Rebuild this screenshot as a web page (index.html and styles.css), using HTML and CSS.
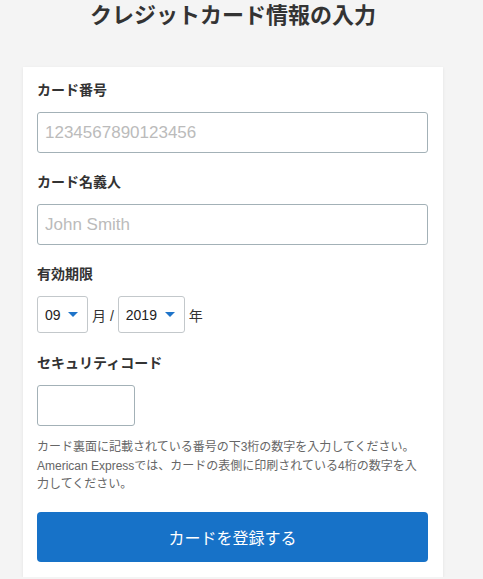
FILE: index.html
```html
<!DOCTYPE html>
<html lang="ja">
<head>
    <meta charset="UTF-8">
    <meta name="viewport" content="width=device-width, initial-scale=1.0">
    <title>クレジットカード情報の入力</title>
    <link rel="stylesheet" href="styles.css">
</head>
<body>
    <div class="wrapper">
        <h1>クレジットカード情報の入力</h1>

        <form class="card-form" id="cardForm">
            <div class="field">
                <label for="number">カード番号</label>
                <input type="text" id="number" class="text-input" placeholder="1234567890123456">
            </div>

            <div class="field">
                <label for="holder">カード名義人</label>
                <input type="text" id="holder" class="text-input" placeholder="John Smith">
            </div>

            <div class="field field-expiry">
                <label for="month">有効期限</label>
                <div class="expiry">
                    <span class="select-box">
                        <select id="month">
                            <option>01</option><option>02</option><option>03</option>
                            <option>04</option><option>05</option><option>06</option>
                            <option>07</option><option>08</option><option selected>09</option>
                            <option>10</option><option>11</option><option>12</option>
                        </select>
                    </span>
                    <span>月 /</span>
                    <span class="select-box">
                        <select id="year">
                            <option selected>2019</option><option>2020</option><option>2021</option>
                            <option>2022</option><option>2023</option><option>2024</option>
                        </select>
                    </span>
                    <span>年</span>
                </div>
            </div>

            <div class="field field-cvc">
                <label for="cvc">セキュリティコード</label>
                <input type="text" id="cvc" class="text-input cvc-input">
                <p class="help">カード裏面に記載されている番号の下3桁の数字を入力してください。<br>American Expressでは、カードの表側に印刷されている4桁の数字を入力してください。</p>
            </div>

            <button type="submit">カードを登録する</button>
        </form>
    </div>
</body>
</html>
```

FILE: styles.css
```css
body {
    margin: 0;
    padding: 0;
    background-color: #f4f4f4;
    font-family: "Liberation Sans", "Noto Sans CJK JP", sans-serif;
    color: #333;
}
.wrapper {
    width: 420px;
    margin-left: 23px;
}
h1 {
    margin: 0;
    height: 67px;
    font-size: 22px;
    line-height: 32px;
    text-align: center;
    color: #333;
    font-weight: bold;
}
.card-form {
    background: white;
    padding: 13px 15px 15px 14px;
    box-shadow: 0 1px 3px rgba(0, 0, 0, 0.08);
}
.field {
    margin-bottom: 19px;
}
.field-expiry {
    margin-bottom: 20px;
}
.field-cvc {
    margin-bottom: 18px;
}
label {
    display: block;
    font-size: 14px;
    line-height: 20px;
    font-weight: bold;
    margin-bottom: 12px;
    color: #333;
}
.text-input {
    display: block;
    box-sizing: border-box;
    width: 100%;
    height: 41px;
    padding: 0 7px;
    border: 1px solid #a3b1b7;
    border-radius: 3px;
    font-family: inherit;
    font-size: 17px;
    color: #333;
    background: white;
}
.text-input::placeholder {
    color: #bbbbbb;
}
.cvc-input {
    width: 98px;
}
.expiry {
    display: flex;
    align-items: center;
    gap: 4px;
    font-size: 14px;
    color: #333;
}
.select-box {
    position: relative;
    display: inline-block;
}
.select-box select {
    appearance: none;
    -webkit-appearance: none;
    box-sizing: border-box;
    height: 37px;
    padding: 0 26px 0 7px;
    border: 1px solid #c3c8cb;
    border-radius: 3px;
    background: white;
    font-family: inherit;
    font-size: 14px;
    color: #222;
}
/* 下向きの三角 */
.select-box::after {
    content: "";
    position: absolute;
    right: 10px;
    top: 16px;
    border-left: 5px solid transparent;
    border-right: 5px solid transparent;
    border-top: 5px solid #1f74c9;
    pointer-events: none;
}
.help {
    margin: 12px 6px 0 0;
    font-size: 12px;
    line-height: 18.5px;
    color: #666;
}
button {
    display: block;
    width: 100%;
    height: 50px;
    border: none;
    border-radius: 4px;
    background-color: #1772c8;
    color: white;
    font-family: inherit;
    font-size: 16px;
    cursor: pointer;
}
button:hover {
    background-color: #135fa8;
}
```
